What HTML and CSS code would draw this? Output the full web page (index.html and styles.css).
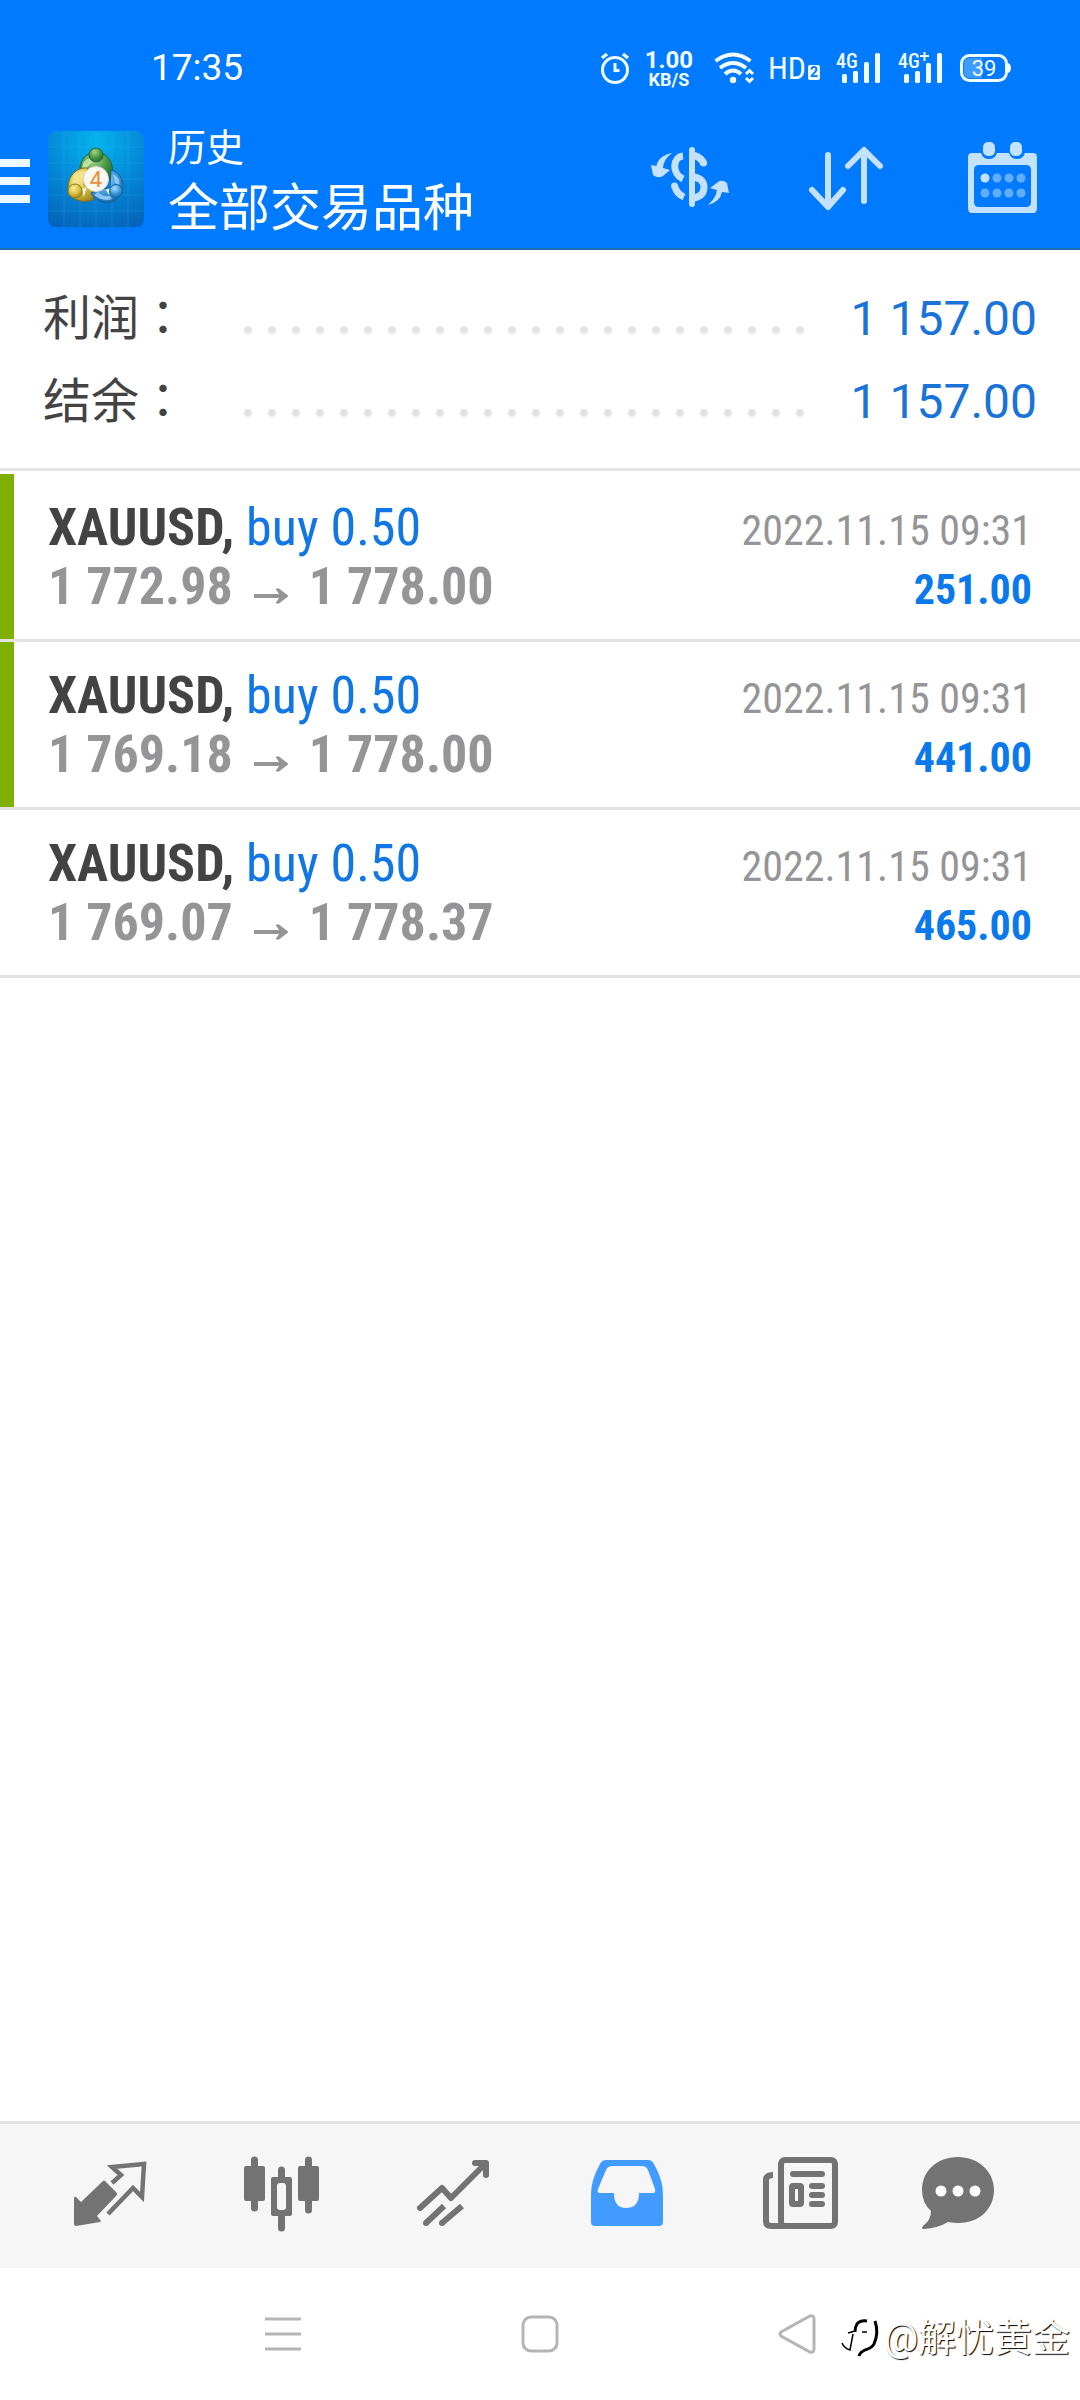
FILE: index.html
```html
<!DOCTYPE html>
<html lang="zh-CN">
<head>
<meta charset="utf-8">
<meta name="viewport" content="width=device-width, initial-scale=1">
<title>历史</title>
<link rel="stylesheet" href="styles.css">
</head>
<body>
<svg class="defs" aria-hidden="true">
  <symbol id="arrow" viewBox="0 0 36 16"><path d="M1 8H32" fill="none" stroke="currentColor" stroke-width="4"/><path d="M23 1L26 1L35 8L26 15L23 15L28 8Z" fill="currentColor" stroke="currentColor" stroke-width="1" stroke-linejoin="round"/></symbol>
</svg>
<header class="header">
  <div class="status">
    <time class="clock">17:35</time>
    <div class="indicators">
      <svg class="alarm" viewBox="0 0 30 32" fill="none" stroke="currentColor"><circle cx="15" cy="18" r="12.500" stroke-width="3"/><path d="M15 11V18.500H19.500" stroke-width="3"/><path d="M2 6L7 2M28 6L23 2" stroke-width="3.500"/></svg>
      <div class="speed"><span class="speed-value">1.00</span><span class="speed-unit">KB/S</span></div>
      <svg class="wifi" viewBox="0 0 40 32" fill="none" stroke="currentColor"><path d="M1.500 9Q19 -4 36.500 9" stroke-width="4"/><path d="M6 16Q19 6 32 16" stroke-width="4"/><path d="M11 22Q19 15 27 22" stroke-width="4"/><circle cx="19" cy="28" r="3.200" fill="currentColor" stroke="none"/><path d="M32 22L35.500 18.500L39 22M32 26L35.500 29.500L39 26" stroke-width="3"/></svg>
      <div class="hd"><span>HD</span><span class="hd-sim">2</span></div>
      <svg class="signal" viewBox="0 0 46 32" fill="currentColor"><text x="0" y="16" class="net">4G</text><rect x="6" y="22" width="5" height="9" rx="1.500"/><rect x="17" y="19" width="5" height="12" rx="1.500"/><rect x="28" y="10" width="5" height="21" rx="1.500"/><rect x="39" y="1" width="5" height="30" rx="1.500"/></svg>
      <svg class="signal" viewBox="0 0 46 32" fill="currentColor"><text x="0" y="16" class="net">4G</text><path d="M22 4H31M26.500 0V9" stroke="currentColor" stroke-width="2"/><rect x="6" y="22" width="5" height="9" rx="1.500"/><rect x="17" y="19" width="5" height="12" rx="1.500"/><rect x="28" y="11" width="5" height="20" rx="1.500"/><rect x="39" y="1" width="5" height="30" rx="1.500"/></svg>
      <svg class="battery" viewBox="0 0 51 28"><rect x="1.500" y="1.500" width="45" height="25" rx="8" fill="none" stroke="currentColor" stroke-width="3"/><path d="M10 4H22V24H10Q4 24 4 18V10Q4 4 10 4Z" fill="#fff" opacity=".25"/><path d="M48 9Q51 10 51 14Q51 18 48 19Z" fill="currentColor"/><text x="24" y="21.500" text-anchor="middle" class="charge">39</text></svg>
    </div>
  </div>
  <div class="appbar">
    <button class="menu" aria-label="菜单"><svg viewBox="0 0 30 44"><path d="M0 4H30M0 22H30M0 40H30" stroke="currentColor" stroke-width="8"/></svg></button>
    <svg class="logo" viewBox="0 0 96 96">
      <defs>
        <radialGradient id="sky" cx=".5" cy=".1" r="1"><stop offset="0" stop-color="#04b4ee"/><stop offset=".5" stop-color="#0489d8"/><stop offset="1" stop-color="#0562b8"/></radialGradient>
        <radialGradient id="gr" cx=".4" cy=".3" r=".8"><stop offset="0" stop-color="#a5d58c"/><stop offset=".5" stop-color="#4c9b45"/><stop offset="1" stop-color="#1c5f2c"/></radialGradient>
        <radialGradient id="ye" cx=".4" cy=".3" r=".8"><stop offset="0" stop-color="#fbf0a0"/><stop offset=".5" stop-color="#dcc33c"/><stop offset="1" stop-color="#97801b"/></radialGradient>
        <radialGradient id="bl" cx=".4" cy=".3" r=".8"><stop offset="0" stop-color="#a8dcff"/><stop offset=".5" stop-color="#3f9bdc"/><stop offset="1" stop-color="#115da3"/></radialGradient>
      </defs>
      <rect width="96" height="96" rx="8" fill="url(#sky)"/>
      <path d="M0 16H96M0 32H96M0 48H96M0 64H96M0 80H96M16 0V96M32 0V96M48 0V96M64 0V96M80 0V96" stroke="#3fc0f4" stroke-width="1" opacity=".2"/>
      <path d="M33 48C29 32 36 22 48 21C60 22 67 32 64 48L55 50L48 36L41 48Z" fill="url(#gr)" stroke="#1c6237"/>
      <path d="M35 42Q32 29 43 27L46 31Q38 34 39 42Z" fill="#b9dfa2"/>
      <path d="M40 37C27 36 20 46 20 58C21 68 33 73 45 69L47 58L36 54Z" fill="url(#ye)" stroke="#766821"/>
      <path d="M38 40Q26 40 24 53L31 53Q34 45 40 45Z" fill="#f3e48a"/>
      <path d="M63 39C75 42 77 55 73 63C67 75 50 74 43 62L51 58L62 57Z" fill="url(#bl)" stroke="#155d98"/>
      <path d="M65 43Q73 47 71 54L67 52ZM46 64Q55 71 64 68L62 65Q54 66 50 61Z" fill="#8cc6ef"/>
      <path d="M34 58L38 57L36 66ZM58 59L62 57L61 64Z" fill="#fff"/>
      <circle cx="48" cy="24" r="7" fill="url(#gr)" stroke="#286a35"/><circle cx="27" cy="60" r="7" fill="url(#ye)" stroke="#8b7920"/><circle cx="68" cy="60" r="6.500" fill="url(#bl)" stroke="#1864a0"/>
      <circle cx="48" cy="48" r="12.500" fill="#faf8f2" stroke="#d8d8ce"/>
      <text x="48" y="56" text-anchor="middle" class="logo-digit">4</text>
    </svg>
    <div class="titles"><p class="subtitle">历史</p><h1 class="title">全部交易品种</h1></div>
    <div class="actions">
      <button aria-label="货币"><svg viewBox="-3 -3 80 80" fill="currentColor"><path d="M41 13V67" stroke="currentColor" stroke-width="6" stroke-linecap="round"/><path d="M32 19C22 20 20 36 32 42M43 18.500Q50 20 53 27" fill="none" stroke="currentColor" stroke-width="7"/><circle cx="52.500" cy="26" r="3.500"/><path d="M43 40Q53 42 53 50Q53 59 43 61M24 50Q26 57 33 60" fill="none" stroke="currentColor" stroke-width="7"/><circle cx="23.500" cy="49" r="3.500"/><path d="M21 16Q7 19 5.500 29L0 28L2 38Q7 42 12 39L19 33L12 31Q12 23 21 16ZM57 68Q69 65 71 55L78 56L76 46Q71 42 67 45L59 51L66 53Q65 61 57 68Z"/></svg></button>
      <button aria-label="排序"><svg viewBox="-1 -1 80 80" fill="none" stroke="currentColor" stroke-width="6" stroke-linecap="round" stroke-linejoin="round"><path d="M22 20V71M6 55L22 72L37 55M58 66V17M42 31L58 15L74 31"/></svg></button>
      <button aria-label="日期"><svg viewBox="-1 1 80 80" fill="currentColor"><path fill-rule="evenodd" d="M9 20H18Q20 26 26 26Q32 26 34 20H46Q48 26 54 26Q60 26 62 20H70Q74 20 74 24V75Q74 80 70 80H9Q5 80 5 75V24Q5 20 9 20ZM16 32Q11 32 11 37V69Q11 74 16 74H63Q68 74 68 69V37Q68 32 63 32Z"/><rect x="20" y="9" width="12" height="14" rx="5"/><rect x="47" y="9" width="12" height="14" rx="5"/><circle cx="22" cy="45" r="4.500"/><g opacity=".5"><circle cx="34" cy="45" r="4.500"/><circle cx="46" cy="45" r="4.500"/><circle cx="58" cy="45" r="4.500"/><circle cx="22" cy="60" r="4.500"/><circle cx="34" cy="60" r="4.500"/><circle cx="46" cy="60" r="4.500"/><circle cx="58" cy="60" r="4.500"/></g></svg></button>
    </div>
  </div>
</header>
<main class="main">
  <dl class="summary">
    <div class="sum-row"><dt>利润<span class="colon" lang="zh-TW">：</span></dt><dd><span class="leader"></span>1 157.00</dd></div>
    <div class="sum-row"><dt>结余<span class="colon" lang="zh-TW">：</span></dt><dd><span class="leader"></span>1 157.00</dd></div>
  </dl>
  <ul class="deals">
    <li><div class="deal marked">
      <div class="line"><span><b class="symbol">XAUUSD,</b> <span class="side">buy 0.50</span></span><time class="date">2022.11.15 09:31</time></div>
      <div class="line"><span class="prices">1 772.98<svg class="arrow"><use href="#arrow"/></svg>1 778.00</span><b class="profit">251.00</b></div>
    </div></li>
    <li><div class="deal marked">
      <div class="line"><span><b class="symbol">XAUUSD,</b> <span class="side">buy 0.50</span></span><time class="date">2022.11.15 09:31</time></div>
      <div class="line"><span class="prices">1 769.18<svg class="arrow"><use href="#arrow"/></svg>1 778.00</span><b class="profit">441.00</b></div>
    </div></li>
    <li><div class="deal">
      <div class="line"><span><b class="symbol">XAUUSD,</b> <span class="side">buy 0.50</span></span><time class="date">2022.11.15 09:31</time></div>
      <div class="line"><span class="prices">1 769.07<svg class="arrow"><use href="#arrow"/></svg>1 778.37</span><b class="profit">465.00</b></div>
    </div></li>
  </ul>
</main>
<nav class="tabs">
  <button aria-label="行情"><svg viewBox="0 0 96 96"><path d="M41 37Q42 36 43 37L54 48Q56 50 54 52L35 72L39 77L38 78L14 82Q12 82 12 80V53L14 53L19 58Z" fill="currentColor"/><path d="M50 39L59 31L50 23L82 20L80 53L71 44L46 70" fill="none" stroke="currentColor" stroke-width="4.500"/></svg></button>
  <button aria-label="图表"><svg viewBox="0 0 96 96"><path d="M20.500 16V64M74.500 16V66M47.500 26V84" stroke="currentColor" stroke-width="7" stroke-linecap="round"/><rect x="10" y="22" width="21" height="35" rx="2" fill="currentColor"/><rect x="64" y="22" width="21" height="35" rx="2" fill="currentColor"/><rect x="37" y="33" width="21" height="39" rx="2" fill="currentColor"/><rect x="43" y="39" width="9" height="27" rx="3" fill="#f6f6f6"/></svg></button>
  <button aria-label="交易"><svg viewBox="0 0 96 96" fill="none" stroke="currentColor" stroke-width="6"><path d="M14 64L36 44L45 54L79 20" stroke-linecap="round" stroke-linejoin="round"/><path d="M69 19H80V31" stroke-linecap="round" stroke-linejoin="round"/><path d="M20 79L38 62M36 79L56 62"/><circle cx="20" cy="79" r="3" fill="currentColor" stroke="none"/><circle cx="36" cy="79" r="3" fill="currentColor" stroke="none"/></svg></button>
  <button class="active" aria-label="历史"><svg viewBox="0 0 96 96"><path fill="currentColor" fill-rule="evenodd" d="M28 16H70Q74 16 76 20Q85 36 85 50V78Q85 82 81 82H17Q13 82 13 78V50Q13 36 22 20Q24 16 28 16ZM34 22Q30 22 28 26L20 45Q19 49 22 49H36Q36 64 48 64Q61 64 61 49H75Q78 49 77 45L70 26Q68 22 64 22Z"/></svg></button>
  <button aria-label="新闻"><svg viewBox="0 0 96 96" fill="none" stroke="currentColor" stroke-width="6"><rect x="31" y="16" width="54" height="66" rx="4"/><path d="M23 31Q16 31 16 36V77Q16 82 21 82H34" /><path d="M43 30H72M62 42H72M62 51H72M62 60H72" stroke-linecap="round"/><rect x="42" y="42" width="9" height="18" rx="1"/></svg></button>
  <button aria-label="聊天"><svg viewBox="0 0 96 96"><path d="M36 13C56 13 72 27 72 46C72 65 57 79 37 79Q31 79 26 78Q16 84 2 85Q-2 85 2 81Q9 76 9 67Q0 59 0 46C0 27 15 13 36 13Z" fill="currentColor"/><circle cx="19" cy="47" r="5.500" fill="#fff"/><circle cx="36" cy="47" r="5.500" fill="#fff"/><circle cx="53" cy="47" r="5.500" fill="#fff"/></svg></button>
</nav>
<footer class="sysnav">
  <button aria-label="最近任务"><svg viewBox="0 0 40 40"><path d="M2 5H38M2 20H38M2 35H38" stroke="currentColor" stroke-width="3"/></svg></button>
  <button aria-label="主屏幕"><svg viewBox="0 0 40 40"><rect x="3" y="3" width="34" height="34" rx="8" fill="none" stroke="currentColor" stroke-width="3"/></svg></button>
  <button aria-label="返回"><svg viewBox="0 0 40 40"><path d="M4 18L33 2Q37 1 37 5V35Q37 39 33 38L4 22Q2 20 4 18Z" fill="none" stroke="currentColor" stroke-width="3"/></svg></button>
  <div class="watermark">
    <svg viewBox="0 0 38 38" fill="none" stroke="#000" stroke-width="2"><path d="M25 2Q18 1 15 5Q13 8 13 13" stroke-width="3"/><path d="M6 14L13 12M20 13H25M11 15L8 31Q2 29 0 24" stroke-width="1.500"/><path d="M33 2Q37 14 32 25C29 32 19 29 17 37" stroke-width="3"/></svg>
    <span>@解忧黄金</span>
  </div>
</footer>
</body>
</html>
```
FILE: styles.css
```css
* { box-sizing: border-box; }

body {
  margin: 0;
  min-height: 100vh;
  display: flex;
  flex-direction: column;
  background: #fff;
  color: #434343;
  font-family: Roboto, "Noto Sans CJK SC", sans-serif;
}

p, h1, dl, dd, ul { margin: 0; padding: 0; font-weight: 400; }
ul { list-style: none; }
svg { display: block; overflow: visible; }
button { border: 0; padding: 0; background: none; color: inherit; font: inherit; }
.defs { position: absolute; width: 0; height: 0; }

/* Header */
.header { background: #007aff; border-bottom: 2px solid #1d6cae; color: #fff; }

.status {
  display: flex;
  justify-content: space-between;
  align-items: center;
  height: 96px;
  padding: 40px 69px 0 151px;
}
.clock { font-size: 37px; line-height: 56px; }
.indicators { display: flex; align-items: center; color: #f0fcff; }
.alarm { width: 30px; height: 32px; margin-right: 15px; }
.speed {
  display: flex;
  flex-direction: column;
  align-items: center;
  width: 48px;
  margin: 2px 21px 0 0;
  font-weight: 700;
}
.speed-value { font-size: 24px; line-height: 22px; }
.speed-unit { font-size: 18px; line-height: 18px; }
.wifi { width: 40px; height: 32px; margin-right: 14px; }
.hd { display: flex; align-items: flex-end; margin-right: 16px; font: 32px/32px "Roboto Condensed", Roboto, sans-serif; }
.hd-sim {
  width: 12px;
  margin: 0 0 4px 2px;
  border-radius: 2px;
  background: #f0fcff;
  color: #007aff;
  font: 700 14px/15px Roboto, sans-serif;
  text-align: center;
}
.signal { width: 46px; height: 32px; margin-right: 16px; }
.net { font: 500 20px "Roboto Condensed", Roboto, sans-serif; }
.battery { width: 51px; height: 28px; }
.charge { font: 22px Roboto, sans-serif; fill: #f0fcff; }

.appbar { display: flex; align-items: center; height: 152px; padding: 17px 38px 3px 0; }
.menu { width: 30px; height: 44px; margin: 4px 18px 0 0; color: #eaf8ff; }
.logo { width: 96px; height: 96px; margin-right: 24px; }
.logo-digit { font: 22px Roboto, sans-serif; fill: #ee8a38; }
.titles { flex: 1; padding-top: 4px; }
.subtitle { font-size: 38px; line-height: 56px; }
.title { font-size: 51px; line-height: 66px; }
.actions { display: flex; gap: 77px; margin-bottom: 10px; color: #c4e1ff; }
.actions svg { width: 80px; height: 80px; }

/* Account totals */
.main { flex: 1; }
.summary { padding: 27px 43px 25px 43px; border-bottom: 3px solid #e3e3e3; }
.sum-row { display: flex; height: 83px; font-size: 48px; line-height: 83px; }
.colon { font-family: "Noto Sans CJK TC", sans-serif; line-height: 0; }
.sum-row dd { flex: 1; display: flex; align-items: center; color: #1a73d8; }
.leader {
  flex: 1;
  height: 8px;
  margin: 22px 40px 0 49px;
  background: radial-gradient(circle at 12px 4px, #e3e3e3 3px, transparent 5px) 0 0 / 24px 8px repeat-x;
}

/* Closed deals */
.deals { padding-top: 3px; font-family: "Roboto Condensed", Roboto, sans-serif; }
.deals li { border-bottom: 3px solid #e3e3e3; }
.deal { padding: 24px 48px 23px 34px; border-left: 14px solid transparent; }
.marked { border-left-color: #7db000; }
.line { display: flex; justify-content: space-between; align-items: baseline; font-size: 52px; line-height: 59px; }
.side { color: #1277e4; }
.prices { color: #959597; font-weight: 700; }
.arrow { display: inline-block; width: 36px; height: 16px; margin: 0 20px; }
.date { font-size: 42px; line-height: 48px; color: #959597; }
.profit { font-size: 42px; line-height: 48px; color: #0a79ec; }

/* Tab bar */
.tabs {
  display: flex;
  padding: 20px 24px 28px;
  border-top: 3px solid #e2e2e2;
  background: #f6f6f6;
  color: #737373;
}
.tabs button { flex: 1; display: flex; justify-content: center; }
.tabs svg { width: 96px; height: 96px; }
.tabs .active { color: #429cff; }

/* System navigation */
.sysnav { position: relative; display: flex; justify-content: center; gap: 217px; padding: 46px 0; color: #b5b5b5; }
.sysnav button svg { width: 40px; height: 40px; }
.watermark {
  position: absolute;
  right: 10px;
  bottom: 34px;
  display: flex;
  align-items: center;
  gap: 4px;
  font-size: 38px;
  line-height: 56px;
  color: #fff;
  text-shadow: 1px 1px 1px #000;
}
.watermark svg { width: 38px; height: 38px; }
```
